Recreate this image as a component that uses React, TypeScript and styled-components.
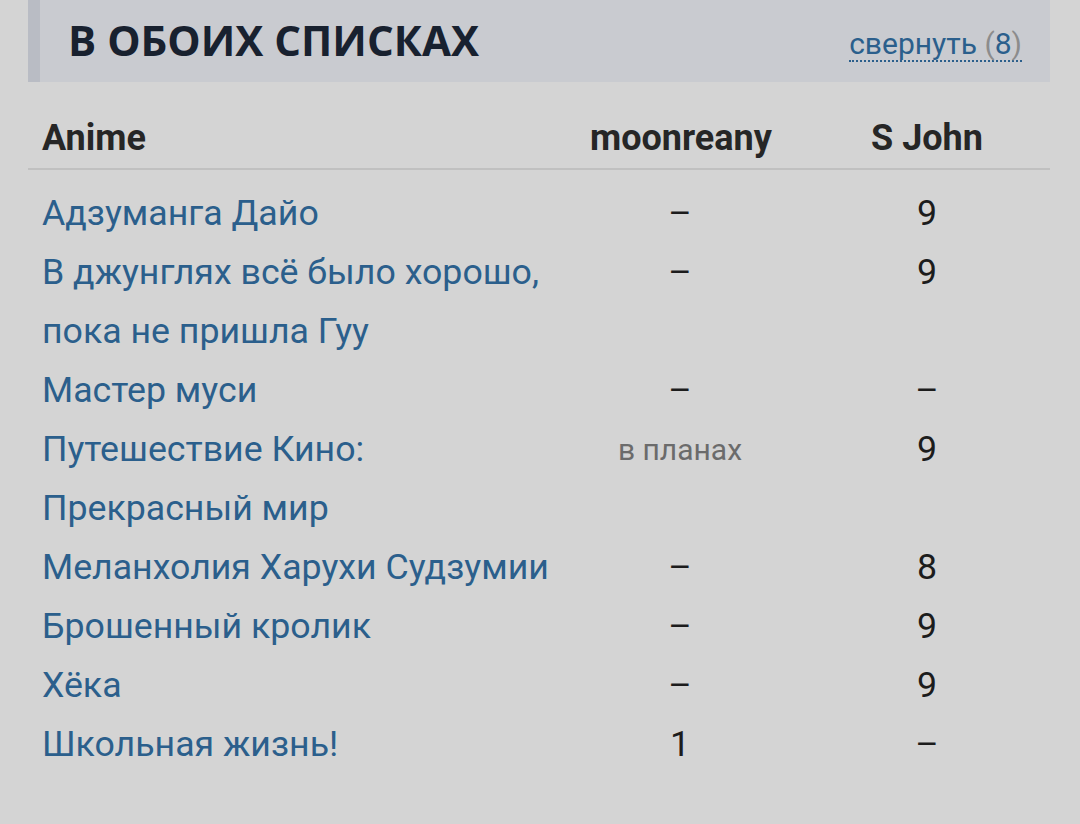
import React from 'react';
import styled, { createGlobalStyle } from 'styled-components';

interface Entry {
  name: string;
  first: string;
  second: string;
}

const entries: Entry[] = [
  { name: 'Адзуманга Дайо', first: '–', second: '9' },
  { name: 'В джунглях всё было хорошо,\nпока не пришла Гуу', first: '–', second: '9' },
  { name: 'Мастер муси', first: '–', second: '–' },
  { name: 'Путешествие Кино:\nПрекрасный мир', first: 'в планах', second: '9' },
  { name: 'Меланхолия Харухи Судзумии', first: '–', second: '8' },
  { name: 'Брошенный кролик', first: '–', second: '9' },
  { name: 'Хёка', first: '–', second: '9' },
  { name: 'Школьная жизнь!', first: '1', second: '–' },
];

const Colors = {
  page: '#d4d4d4',
  band: '#c9cbd0',
  bandEdge: '#b9bcc4',
  title: '#18212f',
  link: '#2b5f8c',
  text: '#1c1c1c',
  muted: '#6b6b6b',
  rule: '#c0c0c0',
};

const App = () => {
  return (
    <Page>
      <GlobalStyle />
      <Section>
        <Band>
          <Title>В обоих списках</Title>
          <Toggle>
            свернуть <Paren>(</Paren>8<Paren>)</Paren>
          </Toggle>
        </Band>
        <Table>
          <HeadCell>Anime</HeadCell>
          <HeadCell center>moonreany</HeadCell>
          <HeadCell center last>
            S John
          </HeadCell>
          <Rule />
          {entries.map((entry, index) => (
            <React.Fragment key={index}>
              <NameCell>{entry.name}</NameCell>
              <ScoreCell muted={entry.first === 'в планах'}>{entry.first}</ScoreCell>
              <ScoreCell last>{entry.second}</ScoreCell>
            </React.Fragment>
          ))}
        </Table>
      </Section>
    </Page>
  );
};

export default App;

const GlobalStyle = createGlobalStyle`
  html, body {
    margin: 0;
    padding: 0;
    background: ${Colors.page};
  }
  body {
    font-family: Roboto, "Liberation Sans", sans-serif;
  }
`;

const Page = styled.div`
  width: 1080px;
  height: 824px;
  overflow: hidden;
  background: ${Colors.page};
`;

const Section = styled.div`
  width: 1022px;
  margin-left: 28px;
`;

const Band = styled.div`
  display: flex;
  align-items: center;
  justify-content: space-between;
  height: 82px;
  box-sizing: border-box;
  padding: 0 28px 0 28px;
  background: ${Colors.band};
  border-left: 12px solid ${Colors.bandEdge};
`;

const Title = styled.h2`
  margin: 0 0 2px;
  font-family: 'Open Sans', 'DejaVu Sans', sans-serif;
  font-weight: 700;
  font-size: 42px;
  text-transform: uppercase;
  color: ${Colors.title};
  line-height: 1;
`;

const Toggle = styled.span`
  font-size: 30px;
  color: ${Colors.link};
  line-height: 32px;
  margin-top: 8px;
  border-bottom: 2px dotted ${Colors.link};
`;

const Paren = styled.span`
  color: #8c8c8c;
`;

const Table = styled.div`
  display: grid;
  grid-template-columns: 562px 180px 1fr;
  margin-top: 28px;
`;

const HeadCell = styled.div<{ center?: boolean; last?: boolean }>`
  font-weight: 700;
  font-size: 36px;
  color: #262626;
  line-height: 56px;
  text-align: ${({ center }) => (center ? 'center' : 'left')};
  padding-left: ${({ center, last }) => (last ? '34px' : center ? '0' : '14px')};
`;

const Rule = styled.div`
  grid-column: 1 / -1;
  height: 2px;
  background: ${Colors.rule};
  margin-top: 2px;
  margin-bottom: 14px;
`;

const NameCell = styled.div`
  font-size: 35.7px;
  line-height: 59px;
  color: ${Colors.link};
  padding-left: 14px;
  white-space: pre-line;
`;

const ScoreCell = styled.div<{ muted?: boolean; last?: boolean }>`
  font-size: ${({ muted }) => (muted ? '30px' : '35.7px')};
  line-height: 59px;
  color: ${({ muted }) => (muted ? Colors.muted : Colors.text)};
  text-align: center;
  padding-left: ${({ last }) => (last ? '34px' : '0')};
`;
